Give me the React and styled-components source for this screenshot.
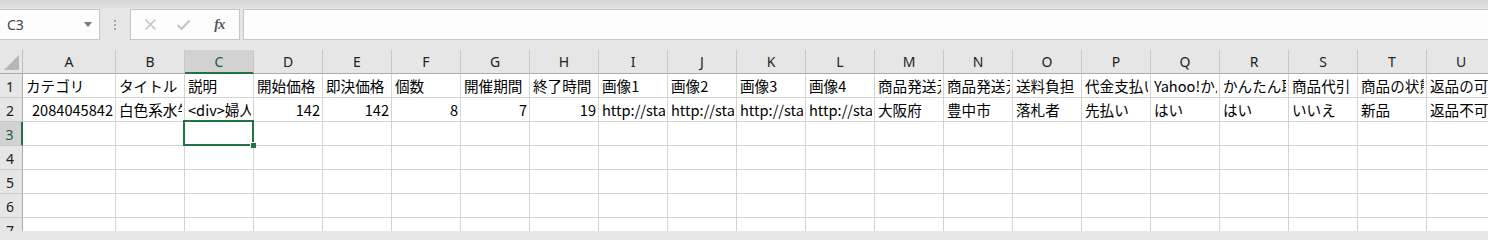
import React from "react";
import styled, { createGlobalStyle, css } from "styled-components";

const GlobalStyle = createGlobalStyle`
  html, body { margin: 0; padding: 0; background: #e6e6e6; overflow: hidden; }
  #root { width: 1488px; height: 231px; overflow: hidden; }
`;

const GREEN = "#217346";
const CELL_FONT = `"Noto Sans CJK JP", "Noto Sans", sans-serif`;

const Page = styled.div`
  width: 1488px;
  height: 231px;
  overflow: hidden;
  background: #e6e6e6;
`;

const Toolbar = styled.div`
  height: 50px;
  box-sizing: border-box;
  padding-top: 9px;
  display: flex;
  align-items: flex-start;
  background: linear-gradient(#d6d6d6 0px, #e2e2e2 8px, #e6e6e6 9px);
`;

const Box = styled.div`
  height: 31px;
  box-sizing: border-box;
  border: 1px solid #c6c6c6;
  background: #fdfdfd;
  display: flex;
  align-items: center;
`;

const NameBox = styled(Box)`
  width: 101px;
  margin-left: -1px;
  padding: 0 8px 0 7px;
  justify-content: space-between;
  font-family: "Noto Sans", "Liberation Sans", sans-serif;
  font-size: 14px;
  color: #444;
`;

const Caret = styled.span`
  width: 0;
  height: 0;
  border-left: 4.5px solid transparent;
  border-right: 4.5px solid transparent;
  border-top: 5px solid #777;
  margin-right: -1px;
`;

const Splitter = styled.div`
  width: 30px;
  height: 31px;
  display: flex;
  flex-direction: column;
  align-items: center;
  justify-content: center;
  gap: 2px;
`;

const Dot = styled.span`
  width: 2px;
  height: 2px;
  background: #a6a6a6;
`;

const FuncBox = styled(Box)`
  width: 110px;
  padding: 0 0 0 3px;
`;

const FuncButton = styled.span`
  width: 33px;
  height: 29px;
  display: flex;
  align-items: center;
  justify-content: center;
`;

const FxText = styled.span`
  font-family: "Liberation Serif", "DejaVu Serif", serif;
  font-style: italic;
  font-weight: bold;
  font-size: 14px;
  color: #555;
  letter-spacing: -0.5px;
  margin-left: 6px;
`;

const FormulaBox = styled(Box)`
  flex: 1;
  margin-left: 3px;
  border-right: none;
`;

const Sheet = styled.div`
  display: grid;
  grid-template-columns: 23px 93px repeat(20, 69px);
  grid-template-rows: 24px repeat(7, 24px);
  background: #fff;
  width: 1500px;
`;

const Corner = styled.div`
  position: relative;
  background: #e6e6e6;
  border-right: 1px solid #bdbdbd;
  border-bottom: 1px solid #ababab;
  box-sizing: border-box;
  height: 24px;
  &::after {
    content: "";
    position: absolute;
    right: 3px;
    bottom: 3px;
    width: 0;
    height: 0;
    border-left: 15px solid transparent;
    border-bottom: 15px solid #b6b6b6;
  }
`;

const ColHead = styled.div`
  box-sizing: border-box;
  height: 24px;
  background: ${(p) => (p.$active ? "#d2d2d2" : "#e6e6e6")};
  border-right: 1px solid #c8c8c8;
  border-bottom: ${(p) => (p.$active ? `2px solid ${GREEN}` : "1px solid #ababab")};
  display: flex;
  align-items: center;
  justify-content: center;
  padding-top: ${(p) => (p.$active ? "1px" : "0")};
  font-family: "Noto Sans", "Liberation Sans", sans-serif;
  font-size: 14px;
  color: ${(p) => (p.$active ? "#1d5a38" : "#222")};
`;

const RowHead = styled.div`
  box-sizing: border-box;
  background: ${(p) => (p.$active ? "#d2d2d2" : "#e6e6e6")};
  border-right: ${(p) => (p.$active ? `2px solid ${GREEN}` : "1px solid #ababab")};
  border-bottom: 1px solid #c8c8c8;
  display: flex;
  align-items: center;
  justify-content: center;
  padding-top: 1px;
  padding-right: 2px;
  font-family: "Noto Sans", "Liberation Sans", sans-serif;
  font-size: 14px;
  color: ${(p) => (p.$active ? "#1d5a38" : "#222")};
`;

const Cell = styled.div`
  position: relative;
  box-sizing: border-box;
  border-right: 1px solid #d4d4d4;
  border-bottom: 1px solid #d4d4d4;
  background: #fff;
  overflow: ${(p) => (p.$selected ? "visible" : "hidden")};
  white-space: nowrap;
  display: flex;
  align-items: center;
  justify-content: ${(p) => (p.$right ? "flex-end" : "flex-start")};
  padding: 1px 2px 0 3px;
  font-family: ${CELL_FONT};
  font-size: 14.6px;
  color: #000;
  ${(p) =>
    p.$selected &&
    css`
      z-index: 2;
      &::before {
        content: "";
        position: absolute;
        left: -2px;
        top: -2px;
        right: -1px;
        bottom: -1px;
        border: 2px solid ${GREEN};
        pointer-events: none;
      }
      &::after {
        content: "";
        position: absolute;
        right: -3px;
        bottom: -3px;
        width: 5px;
        height: 5px;
        background: ${GREEN};
        border: 1px solid #fff;
        border-right: 0;
        border-bottom: 0;
      }
    `}
`;

const CellText = styled.span`
  overflow: hidden;
  display: block;
  line-height: 22px;
`;

const cols = "ABCDEFGHIJKLMNOPQRSTU".split("");

const row1 = [
  "カテゴリ",
  "タイトル",
  "説明",
  "開始価格",
  "即決価格",
  "個数",
  "開催期間",
  "終了時間",
  "画像1",
  "画像2",
  "画像3",
  "画像4",
  "商品発送元の都道府県",
  "商品発送元の市区町村",
  "送料負担",
  "代金支払い",
  "Yahoo!かんたん決済",
  "かんたん取引",
  "商品代引",
  "商品の状態",
  "返品の可否",
];

const row2 = [
  ["2084045842", true],
  ["白色系水牛角", false],
  ["<div>婦人用", false],
  ["142", true],
  ["142", true],
  ["8", true],
  ["7", true],
  ["19", true],
  ["http://stat.example", false],
  ["http://stat.example", false],
  ["http://stat.example", false],
  ["http://stat.example", false],
  ["大阪府", false],
  ["豊中市", false],
  ["落札者", false],
  ["先払い", false],
  ["はい", false],
  ["はい", false],
  ["いいえ", false],
  ["新品", false],
  ["返品不可", false],
];

function XIcon() {
  return (
    <svg width="13" height="13" viewBox="0 0 13 13">
      <path d="M1.5 1.5 L11.5 11.5 M11.5 1.5 L1.5 11.5" stroke="#c3c3c3" strokeWidth="1.6" fill="none" />
    </svg>
  );
}

function CheckIcon() {
  return (
    <svg width="15" height="12" viewBox="0 0 15 12">
      <path d="M1.5 6 L5.5 10 L13.5 1.5" stroke="#c3c3c3" strokeWidth="2" fill="none" />
    </svg>
  );
}

export default function App() {
  return (
    <Page>
      <GlobalStyle />
      <Toolbar>
        <NameBox>
          <span>C3</span>
          <Caret />
        </NameBox>
        <Splitter>
          <Dot />
          <Dot />
          <Dot />
        </Splitter>
        <FuncBox>
          <FuncButton>
            <XIcon />
          </FuncButton>
          <FuncButton>
            <CheckIcon />
          </FuncButton>
          <FuncButton>
            <FxText>fx</FxText>
          </FuncButton>
        </FuncBox>
        <FormulaBox />
      </Toolbar>
      <Sheet>
        <Corner />
        {cols.map((c) => (
          <ColHead key={c} $active={c === "C"}>
            {c}
          </ColHead>
        ))}
        {[1, 2, 3, 4, 5, 6, 7].map((r) => (
          <React.Fragment key={r}>
            <RowHead $active={r === 3}>{r}</RowHead>
            {cols.map((c, i) => {
              let text = "";
              let right = false;
              if (r === 1) text = row1[i];
              if (r === 2) {
                text = row2[i][0];
                right = row2[i][1];
              }
              return (
                <Cell key={c} $right={right} $selected={r === 3 && c === "C"}>
                  {text && <CellText>{text}</CellText>}
                </Cell>
              );
            })}
          </React.Fragment>
        ))}
      </Sheet>
    </Page>
  );
}
